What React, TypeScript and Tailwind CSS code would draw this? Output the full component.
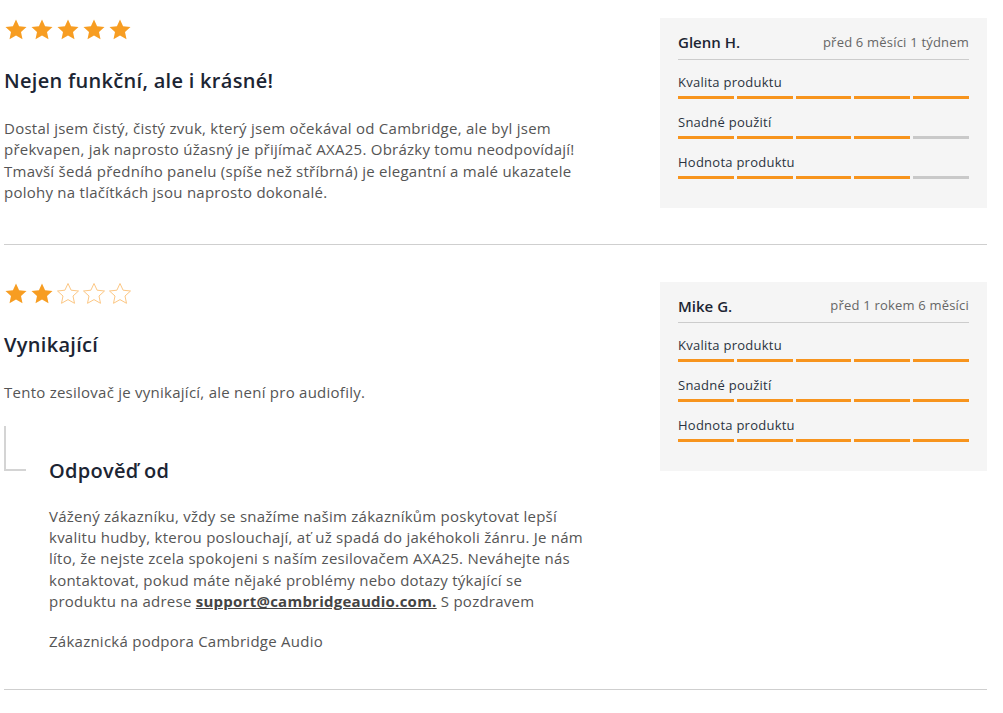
import React from 'react';

type Review = {
  stars: number;
  title: string;
  body: string;
  author: string;
  date: string;
  ratings: { label: string; value: number }[];
  reply?: boolean;
};

const reviews: Review[] = [
  {
    stars: 5,
    title: 'Nejen funkční, ale i krásné!',
    body: 'Dostal jsem čistý, čistý zvuk, který jsem očekával od Cambridge, ale byl jsem překvapen, jak naprosto úžasný je přijímač AXA25. Obrázky tomu neodpovídají! Tmavší šedá předního panelu (spíše než stříbrná) je elegantní a malé ukazatele polohy na tlačítkách jsou naprosto dokonalé.',
    author: 'Glenn H.',
    date: 'před 6 měsíci 1 týdnem',
    ratings: [
      { label: 'Kvalita produktu', value: 5 },
      { label: 'Snadné použití', value: 4 },
      { label: 'Hodnota produktu', value: 4 },
    ],
  },
  {
    stars: 2,
    title: 'Vynikající',
    body: 'Tento zesilovač je vynikající, ale není pro audiofily.',
    author: 'Mike G.',
    date: 'před 1 rokem 6 měsíci',
    ratings: [
      { label: 'Kvalita produktu', value: 5 },
      { label: 'Snadné použití', value: 5 },
      { label: 'Hodnota produktu', value: 5 },
    ],
    reply: true,
  },
];

const STAR = '12,1.5 15.1,8.2 22.5,9 17,14 18.5,21.3 12,17.6 5.5,21.3 7,14 1.5,9 8.9,8.2';

function Stars({ count }: { count: number }) {
  return (
    <div className="flex gap-[2px]">
      {[0, 1, 2, 3, 4].map((i) => (
        <svg key={i} width="24" height="24" viewBox="0 0 24 24">
          {i < count ? (
            <polygon points={STAR} fill="#f79d22" />
          ) : (
            <polygon points={STAR} fill="none" stroke="#fcc784" strokeWidth="1" />
          )}
        </svg>
      ))}
    </div>
  );
}

function Bars({ value }: { value: number }) {
  return (
    <div className="flex gap-[3px] mt-[5px]">
      {[0, 1, 2, 3, 4].map((i) => (
        <div key={i} className={`h-[3px] flex-1 ${i < value ? 'bg-[#f7941d]' : 'bg-[#c9c9c9]'}`} />
      ))}
    </div>
  );
}

export default function App() {
  return (
    <div className="bg-white pl-[4px] pr-[16px] text-[#555]" style={{ fontFamily: '"Open Sans", "Noto Sans", sans-serif' }}>
      {reviews.map((r, idx) => (
        <div key={idx} className={`flex justify-between border-b border-[#cfcfcf] ${idx === 0 ? 'pt-[18px] pb-[36px]' : 'pt-[37px] pb-[36px]'}`}>
          <div className="w-[590px]">
            <Stars count={r.stars} />
            <h2 className="mt-[25px] text-[20px] font-semibold tracking-[0.3px] text-[#1c2533] leading-[28px]">{r.title}</h2>
            <p className="mt-[23px] text-[15px] leading-[21.3px] tracking-[0.25px]">{r.body}</p>
            {r.reply && (
              <div className="mt-[23px]">
                <div className="w-[22px] h-[45px] border-l-2 border-b-2 border-[#d4d4d4]" />
                <div className="pl-[45px] -mt-[14px]">
                  <h3 className="text-[20px] font-semibold tracking-[0.3px] text-[#1c2533] leading-[28px]">Odpověď od</h3>
                  <p className="mt-[21px] text-[15px] leading-[21.3px] tracking-[0.25px] w-[536px]">
                    Vážený zákazníku, vždy se snažíme našim zákazníkům poskytovat lepší kvalitu hudby, kterou poslouchají, ať už spadá do jakéhokoli žánru. Je nám líto, že nejste zcela spokojeni s naším zesilovačem AXA25. Neváhejte nás kontaktovat, pokud máte nějaké problémy nebo dotazy týkající se produktu na adrese{' '}
                    <a className="font-bold underline text-[#444]">support@cambridgeaudio.com.</a> S pozdravem
                  </p>
                  <p className="mt-[19px] text-[15px] leading-[21.3px] tracking-[0.25px]">Zákaznická podpora Cambridge Audio</p>
                </div>
              </div>
            )}
          </div>
          <div className="w-[327px] self-start bg-[#f5f5f5] px-[18px] pt-[13px] pb-[29px]">
            <div className="flex justify-between items-center border-b border-[#cccccc] pb-[5px]">
              <span className="text-[15px] font-semibold text-[#1c2533]">{r.author}</span>
              <span className="text-[13px] tracking-[0.2px] text-[#666]">{r.date}</span>
            </div>
            {r.ratings.map((q, j) => (
              <div key={j} className={j === 0 ? 'mt-[13px]' : 'mt-[14px]'}>
                <div className="text-[13px] tracking-[0.25px] text-[#2a3340] leading-[18px]">{q.label}</div>
                <Bars value={q.value} />
              </div>
            ))}
          </div>
        </div>
      ))}
    </div>
  );
}
